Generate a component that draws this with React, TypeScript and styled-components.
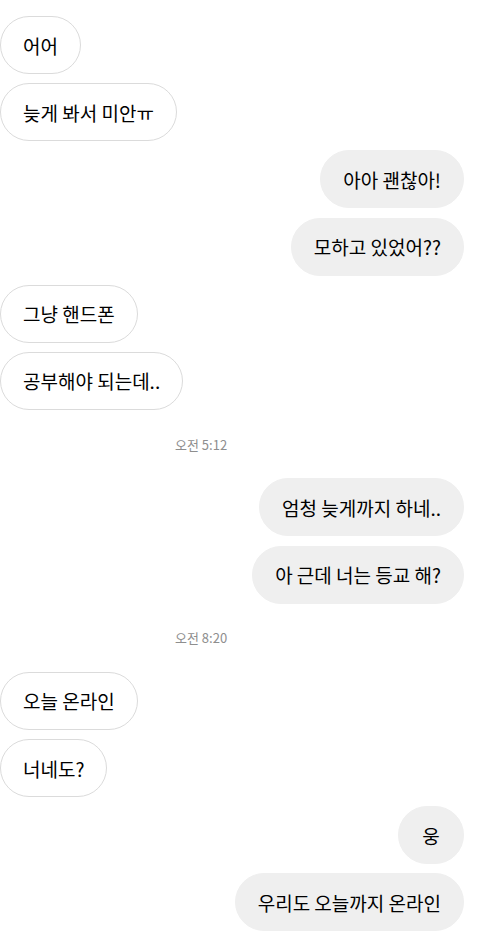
import styled, {createGlobalStyle} from "styled-components";

type Item =
    | {kind: "msg"; side: "left" | "right"; text: string}
    | {kind: "time"; text: string};

const items: Item[] = [
    {kind: "msg", side: "left", text: "어어"},
    {kind: "msg", side: "left", text: "늦게 봐서 미안ㅠ"},
    {kind: "msg", side: "right", text: "아아 괜찮아!"},
    {kind: "msg", side: "right", text: "모하고 있었어??"},
    {kind: "msg", side: "left", text: "그냥 핸드폰"},
    {kind: "msg", side: "left", text: "공부해야 되는데.."},
    {kind: "time", text: "오전 5:12"},
    {kind: "msg", side: "right", text: "엄청 늦게까지 하네.."},
    {kind: "msg", side: "right", text: "아 근데 너는 등교 해?"},
    {kind: "time", text: "오전 8:20"},
    {kind: "msg", side: "left", text: "오늘 온라인"},
    {kind: "msg", side: "left", text: "너네도?"},
    {kind: "msg", side: "right", text: "웅"},
    {kind: "msg", side: "right", text: "우리도 오늘까지 온라인"},
];

export default function App() {
    return (
        <>
            <GlobalStyle />
            <Thread>
                {items.map((item, i) =>
                    item.kind === "time" ? (
                        <TimeRow key={i}>{item.text}</TimeRow>
                    ) : (
                        <Row key={i} $side={item.side}>
                            <Bubble $side={item.side}>{item.text}</Bubble>
                        </Row>
                    )
                )}
            </Thread>
        </>
    );
}

const GlobalStyle = createGlobalStyle`
  html, body {
    margin: 0;
    padding: 0;
    background: #ffffff;
  }
  body {
    font-family: "Noto Sans CJK KR", "Noto Sans", sans-serif;
    color: #000;
  }
`;

const Thread = styled.div`
  display: flex;
  flex-direction: column;
  gap: 9.2px;
  padding: 16px 16px 0 0;
`;

const Row = styled.div<{ $side: "left" | "right" }>`
  display: flex;
  justify-content: ${(p) => (p.$side === "right" ? "flex-end" : "flex-start")};
`;

const Bubble = styled.div<{ $side: "left" | "right" }>`
  box-sizing: border-box;
  height: 58px;
  min-width: 66px;
  display: flex;
  align-items: center;
  justify-content: center;
  padding: 0 22px;
  border-radius: 29px;
  font-size: 19px;
  white-space: nowrap;
  background: ${(p) => (p.$side === "right" ? "#efefef" : "#ffffff")};
  border: 1px solid ${(p) => (p.$side === "right" ? "#efefef" : "#dbdbdb")};
`;

const TimeRow = styled.div`
  height: 50px;
  display: flex;
  align-items: center;
  padding: 0 0 0 175px;
  font-size: 13px;
  color: #8e8e8e;
`;
